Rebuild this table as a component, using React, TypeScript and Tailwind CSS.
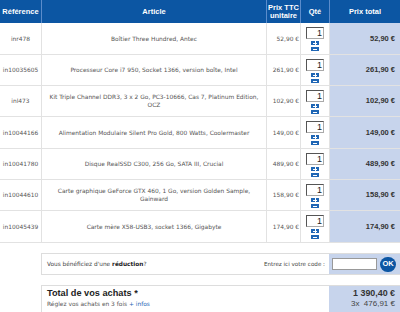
import React from "react";

const rows = [
  { ref: "inr478", art: ["Boîtier Three Hundred, Antec"], pu: "52,90 €", pt: "52,90 €", h: "h-[32px]" },
  { ref: "in10035605", art: ["Processeur Core i7 950, Socket 1366, version boîte, Intel"], pu: "261,90 €", pt: "261,90 €", h: "h-[31px]" },
  { ref: "inl473", art: ["Kit Triple Channel DDR3, 3 x 2 Go, PC3-10666, Cas 7, Platinum Edition,", "OCZ"], pu: "102,90 €", pt: "102,90 €", h: "h-[31px]" },
  { ref: "in10044166", art: ["Alimentation Modulaire Silent Pro Gold, 800 Watts, Coolermaster"], pu: "149,00 €", pt: "149,00 €", h: "h-[32px]" },
  { ref: "in10041780", art: ["Disque RealSSD C300, 256 Go, SATA III, Crucial"], pu: "489,90 €", pt: "489,90 €", h: "h-[31px]" },
  { ref: "in10044610", art: ["Carte graphique GeForce GTX 460, 1 Go, version Golden Sample,", "Gainward"], pu: "158,90 €", pt: "158,90 €", h: "h-[31px]" },
  { ref: "in10045439", art: ["Carte mère X58-USB3, socket 1366, Gigabyte"], pu: "174,90 €", pt: "174,90 €", h: "h-[32px]" },
];

const body = "font-['DejaVu_Sans',Verdana,sans-serif]";
const arial = "font-['Liberation_Sans',Arial,sans-serif]";

function Qty() {
  return (
    <div className="flex flex-col items-center pt-[4px]">
      <div className={`w-[18px] h-[12px] bg-white border border-[#555] border-r-[#aaa] border-b-[#aaa] text-right pr-[1px] text-[9px] leading-[10px] text-[#222] ${arial}`}>1</div>
      <div className="mt-[2px] w-[8px] h-[4px] bg-[#1f66b5] flex items-center justify-center">
        <div className="relative w-[4px] h-[4px]">
          <div className="absolute left-0 top-[1.5px] w-[4px] h-[1px] bg-white" />
          <div className="absolute left-[1.5px] top-0 w-[1px] h-[4px] bg-white" />
        </div>
      </div>
      <div className="mt-[2px] w-[8px] h-[4px] bg-[#1f66b5] flex items-center justify-center">
        <div className="w-[4px] h-[1px] bg-white" />
      </div>
    </div>
  );
}

export default function App() {
  return (
    <div className="w-[400px] h-[312px] bg-white overflow-hidden relative">
      {/* Header */}
      <div className={`flex h-[23px] bg-[#0c56a3] text-white font-bold text-[7.5px] leading-[8px] ${arial}`}>
        <div className="w-[41px] flex items-center justify-center">Référence</div>
        <div className="w-[225px] flex items-center justify-center border-l border-[#5b8ccb]">Article</div>
        <div className="w-[34px] flex items-center justify-center text-center border-l border-[#5b8ccb]">Prix TTC<br />unitaire</div>
        <div className="w-[29px] flex items-center justify-center border-l border-[#5b8ccb]">Qté</div>
        <div className="w-[71px] flex items-center justify-center border-l border-[#5b8ccb]">Prix total</div>
      </div>
      {/* Rows */}
      {rows.map((r) => (
        <div key={r.ref} className={`flex ${r.h} border-b border-[#e2e2e2] text-[#555] text-[5.9px] leading-[8px] ${body}`}>
          <div className="w-[41px] flex items-center justify-center">{r.ref}</div>
          <div className="w-[225px] flex flex-col items-center justify-center text-center border-l border-[#e2e2e2] whitespace-nowrap">
            {r.art.map((l) => (
              <span key={l}>{l}</span>
            ))}
          </div>
          <div className="w-[34px] flex items-center justify-end pr-[1px] border-l border-[#e2e2e2]">{r.pu}</div>
          <div className="w-[29px] border-l border-[#e2e2e2]">
            <Qty />
          </div>
          <div className={`w-[71px] flex items-center justify-end pr-[5px] bg-[#c7d4ec] border-l border-[#e2e2e2] font-bold text-[#333] text-[7.5px] ${arial}`}>{r.pt}</div>
        </div>
      ))}
      {/* Reduction */}
      <div className="flex mt-[10px] ml-[41px] h-[22px] border border-r-0 border-[#dddddd]">
        <div className={`flex-1 flex items-center justify-between pl-[5px] pr-[4px] text-[5.8px] text-[#444] ${body}`}>
          <span>
            Vous bénéficiez d'une <b className="text-[#222]">réduction</b>?
          </span>
          <span className="text-[5.6px]">Entrez ici votre code :</span>
        </div>
        <div className="w-[71px] bg-[#c7d4ec] flex items-center pl-[3px]">
          <div className="w-[45px] h-[12px] bg-white border border-[#999]" />
          <div className={`ml-[3px] w-[16px] h-[15px] rounded-full bg-[#0c56a3] text-white font-bold text-[7.5px] flex items-center justify-center ${arial}`}>OK</div>
        </div>
      </div>
      {/* Total */}
      <div className="flex mt-[10px] ml-[41px] h-[40px] border-t border-l border-[#dddddd]">
        <div className="flex-1 pl-[5px] pt-[1px]">
          <div className={`font-bold text-[9.2px] leading-[12px] text-[#222] ${arial}`}>Total de vos achats *</div>
          <div className={`mt-[1px] text-[5.9px] text-[#555] ${body}`}>
            Réglez vos achats en 3 fois <span className="text-[#1f66b5]">+ infos</span>
          </div>
        </div>
        <div className={`w-[71px] bg-[#c7d4ec] flex flex-col items-end pr-[5px] pt-[1px] text-[#333] ${arial}`}>
          <div className="font-bold text-[8.9px] leading-[12px]">1 390,40 €</div>
          <div className="text-[8px] leading-[10px] text-[#444]">3x&nbsp;&nbsp;476,91 €</div>
        </div>
      </div>
    </div>
  );
}
